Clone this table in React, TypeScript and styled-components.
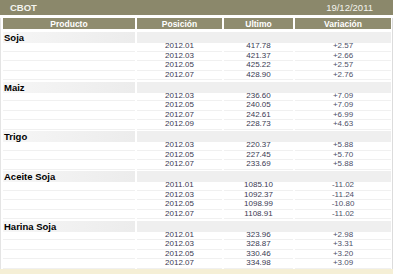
import React from 'react';
import styled, { createGlobalStyle } from 'styled-components';

const GlobalStyle = createGlobalStyle`
  html, body {
    margin: 0;
    padding: 0;
    background: #ffffff;
  }
  body {
    font-family: 'Liberation Sans', Arial, sans-serif;
  }
`;

type Quote = { pos: string; last: string; change: string };
type Group = { name: string; rows: Quote[] };

const groups: Group[] = [
  {
    name: 'Soja',
    rows: [
      { pos: '2012.01', last: '417.78', change: '+2.57' },
      { pos: '2012.03', last: '421.37', change: '+2.66' },
      { pos: '2012.05', last: '425.22', change: '+2.57' },
      { pos: '2012.07', last: '428.90', change: '+2.76' },
    ],
  },
  {
    name: 'Maiz',
    rows: [
      { pos: '2012.03', last: '236.60', change: '+7.09' },
      { pos: '2012.05', last: '240.05', change: '+7.09' },
      { pos: '2012.07', last: '242.61', change: '+6.99' },
      { pos: '2012.09', last: '228.73', change: '+4.63' },
    ],
  },
  {
    name: 'Trigo',
    rows: [
      { pos: '2012.03', last: '220.37', change: '+5.88' },
      { pos: '2012.05', last: '227.45', change: '+5.70' },
      { pos: '2012.07', last: '233.69', change: '+5.88' },
    ],
  },
  {
    name: 'Aceite Soja',
    rows: [
      { pos: '2011.01', last: '1085.10', change: '-11.02' },
      { pos: '2012.03', last: '1092.37', change: '-11.24' },
      { pos: '2012.05', last: '1098.99', change: '-10.80' },
      { pos: '2012.07', last: '1108.91', change: '-11.02' },
    ],
  },
  {
    name: 'Harina Soja',
    rows: [
      { pos: '2012.01', last: '323.96', change: '+2.98' },
      { pos: '2012.03', last: '328.87', change: '+3.31' },
      { pos: '2012.05', last: '330.46', change: '+3.20' },
      { pos: '2012.07', last: '334.98', change: '+3.09' },
    ],
  },
];

const COLUMNS = '132px 85px 69px 96px';

const Panel = styled.div`
  width: 393px;
  display: flex;
  flex-direction: column;
`;

const TitleBar = styled.div`
  height: 15px;
  background: #8b886b;
  color: #f4f4ee;
  display: flex;
  align-items: center;
  justify-content: space-between;
  padding: 0 20px 0 10px;
`;

const Title = styled.span`
  font-weight: bold;
  font-size: 9.5px;
`;

const DateLabel = styled.span`
  font-size: 9.5px;
`;

const Body = styled.div`
  margin-top: 3px;
  padding-left: 2px;
  border-left: 1px solid #e4e4e4;
  border-right: 1px solid #dcdcdc;
  height: 250.5px;
`;

const Row = styled.div`
  display: grid;
  grid-template-columns: ${COLUMNS};
  column-gap: 2px;
`;

const HeaderRow = styled(Row)`
  height: 11px;
  margin-bottom: 1.5px;
`;

const HeadCell = styled.div`
  background: #8f8c6f;
  color: #ffffff;
  font-weight: bold;
  font-size: 8.5px;
  display: flex;
  align-items: center;
  justify-content: center;
`;

const GroupRow = styled(Row)`
  height: 11.5px;
  padding-top: 1.5px;
  box-sizing: border-box;
`;

const GroupCell = styled.div<{ $first?: boolean }>`
  background: ${(p) =>
    p.$first ? 'linear-gradient(to right, #f6f6f6, #ececec)' : '#efefef'};
  grid-column: ${(p) => (p.$first ? 'auto' : '2 / 5')};
  color: #000000;
  font-weight: bold;
  font-size: 9.5px;
  display: flex;
  align-items: center;
  padding-left: 1px;
`;

const DataRow = styled(Row)`
  height: 9.5px;
`;

const DataCell = styled.div<{ $tone?: 'dim' }>`
  border-bottom: 1px solid #f0f0f0;
  box-sizing: border-box;
  color: ${(p) => (p.$tone === 'dim' ? '#4e5068' : '#3a3a52')};
  font-size: 8px;
  line-height: 8.5px;
  text-align: center;
`;

const Footer = styled.div`
  height: 6px;
  background: #f5efd6;
`;

export default function App() {
  return (
    <>
      <GlobalStyle />
      <Panel>
        <TitleBar>
          <Title>CBOT</Title>
          <DateLabel>19/12/2011</DateLabel>
        </TitleBar>
        <Body>
          <HeaderRow>
            <HeadCell>Producto</HeadCell>
            <HeadCell>Posición</HeadCell>
            <HeadCell>Ultimo</HeadCell>
            <HeadCell>Variación</HeadCell>
          </HeaderRow>
          {groups.map((g) => (
            <React.Fragment key={g.name}>
              <GroupRow>
                <GroupCell $first>{g.name}</GroupCell>
                <GroupCell />
              </GroupRow>
              {g.rows.map((r) => (
                <DataRow key={g.name + r.pos}>
                  <DataCell />
                  <DataCell>{r.pos}</DataCell>
                  <DataCell>{r.last}</DataCell>
                  <DataCell $tone="dim">{r.change}</DataCell>
                </DataRow>
              ))}
            </React.Fragment>
          ))}
        </Body>
        <Footer />
      </Panel>
    </>
  );
}
